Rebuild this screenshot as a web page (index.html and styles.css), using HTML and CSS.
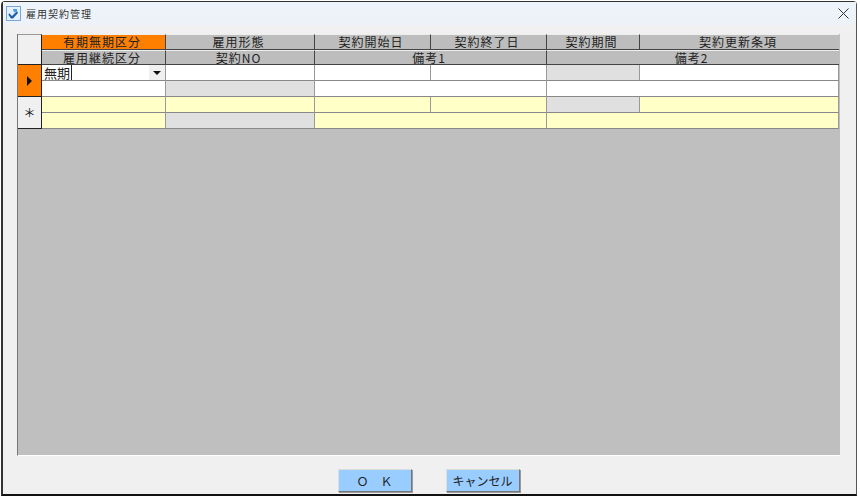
FILE: index.html
```html
<!DOCTYPE html>
<html>
<head>
<meta charset="utf-8">
	<title>雇用契約管理</title>

	<link rel="stylesheet" href="styles.css">
</head>
<body>

<div class="window">
	<div class="titlebar">
		<div class="title-left">
			<svg class="app-icon" width="15" height="15" viewBox="0 0 15 15">
				<rect x="0.5" y="0.5" width="14" height="14" fill="#e6f0fb" stroke="#7aa6d8"/>
				<path d="M3 7 L6 10 L11 5 L12 7 L7 12.5 L5 12.5 L2.5 9 Z" fill="#1f5fa8"/>
				<path d="M7 3 L11 3 L11 5 L8 6.5 Z" fill="#3f9ae8"/>
			</svg>
			<span class="title-text">雇用契約管理</span>
		</div>
		<svg class="close" width="11" height="11" viewBox="0 0 11 11">
			<path d="M0.5 0.5 L10.5 10.5 M10.5 0.5 L0.5 10.5" stroke="#333" stroke-width="1" fill="none"/>
		</svg>
	</div>

	<div class="content">
		<div class="grid-panel">
			<div class="grid">
				<div class="corner"></div>
				<div class="head head-active">有期無期区分</div>
				<div class="head">雇用形態</div>
				<div class="head">契約開始日</div>
				<div class="head">契約終了日</div>
				<div class="head">契約期間</div>
				<div class="head last">契約更新条項</div>
				<div class="head">雇用継続区分</div>
				<div class="head">契約NO</div>
				<div class="head span-2">備考1</div>
				<div class="head span-2 last">備考2</div>

				<div class="row-head row-current"><span class="arrow"></span></div>
				<div class="cell combo">
					<span class="combo-text">無期</span>
					<span class="combo-btn"><span class="combo-arrow"></span></span>
				</div>
				<div class="cell"></div>
				<div class="cell"></div>
				<div class="cell"></div>
				<div class="cell off"></div>
				<div class="cell last"></div>
				<div class="cell"></div>
				<div class="cell off"></div>
				<div class="cell span-2"></div>
				<div class="cell span-2 last"></div>

				<div class="row-head row-new">＊</div>
				<div class="cell new"></div>
				<div class="cell new"></div>
				<div class="cell new"></div>
				<div class="cell new"></div>
				<div class="cell off"></div>
				<div class="cell new last"></div>
				<div class="cell new"></div>
				<div class="cell off"></div>
				<div class="cell new span-2"></div>
				<div class="cell new span-2 last"></div>
			</div>
		</div>

		<div class="buttons">
			<button class="btn btn-ok">Ｏ　Ｋ</button>
			<button class="btn">キャンセル</button>
		</div>
	</div>
</div>

</body>
</html>
```

FILE: styles.css
```css
body{
	margin: 0;
	background: #fff;
	font-family: "Noto Sans CJK JP", "Liberation Sans", sans-serif;
	color: #222;
}
.window{
	margin: 1px 0 0 1px;
	width: 853px;
	height: 492px;
	border: 2px solid #333;
	border-top-width: 1px;
	border-right: 1px solid #555;
	border-bottom: 2px solid #111;
	border-radius: 4px 4px 0 0;
	background: #f0f0f0;
	display: flex;
	flex-direction: column;
}
.titlebar{
	height: 23px;
	padding: 0 7px 0 3px;
	background: linear-gradient(#eef4fb, #edf2f9);
	display: flex;
	align-items: center;
	justify-content: space-between;
	flex-shrink: 0;
}
.title-left{
	display: flex;
	align-items: center;
	gap: 5px;
}
.title-text{
	font-size: 10px;
	letter-spacing: 1px;
	color: #333;
}
.content{
	flex: 1;
	display: flex;
	flex-direction: column;
	padding: 9px 0 0 14px;
}
.grid-panel{
	width: 823px;
	height: 422px;
	background: #bfbfbf;
	border-left: 1px solid #777;
	border-bottom: 1px solid #fff;
	box-sizing: border-box;
}
.grid{
	display: grid;
	grid-template-columns: 24px 124px 149px 116px 116px 93px 199px;
	grid-template-rows: 16px 15px 16px 16px 16px 16px;
}
.corner{
	grid-row: span 2;
	background: #f0f0f0;
	border-right: 1px solid #222;
	border-bottom: 1px solid #222;
	border-top: 1px solid #999;
}
.head{
	background: #bdbdbd;
	border-right: 1px solid #444;
	border-bottom: 1px solid #444;
	border-top: 1px solid #eee;
	box-sizing: border-box;
	font-size: 12px;
	line-height: 13px;
	letter-spacing: 1px;
	text-align: center;
	white-space: nowrap;
	padding-right: 3px;
}
.head-active{
	background: #ff8000;
}
.span-2{
	grid-column: span 2;
}
.last{
	border-right: none;
}
.row-head{
	grid-row: span 2;
	border-right: 1px solid #222;
	border-bottom: 1px solid #222;
	display: flex;
	align-items: center;
	justify-content: center;
}
.row-current{
	background: #ff8000;
}
.row-new{
	background: #f0f0f0;
	font-size: 12px;
	line-height: 1;
	color: #111;
}
.arrow{
	width: 0;
	height: 0;
	border-left: 5px solid #111;
	border-top: 5px solid transparent;
	border-bottom: 5px solid transparent;
}
.cell{
	background: #fff;
	border-right: 1px solid #999;
	border-bottom: 1px solid #888;
	box-sizing: border-box;
}
.cell.off{
	background: #e0e0e0;
}
.cell.new{
	background: #ffffc8;
}
.combo{
	display: flex;
	justify-content: space-between;
	padding-left: 2px;
}
.combo-text{
	font-size: 13px;
	line-height: 15px;
	border-right: 1px solid #222;
	padding-right: 1px;
	height: 15px;
}
.combo-btn{
	width: 16px;
	background: #f0f0f0;
	display: flex;
	align-items: center;
	justify-content: center;
}
.combo-arrow{
	width: 0;
	height: 0;
	border-top: 4px solid #111;
	border-left: 4px solid transparent;
	border-right: 4px solid transparent;
}
.buttons{
	display: flex;
	justify-content: center;
	gap: 34px;
	padding-top: 13px;
	padding-right: 16px;
}
.btn{
	width: 74px;
	height: 23px;
	padding: 0;
	background: #99ccff;
	border: 1px solid;
	border-color: #ddd #777 #777 #ddd;
	box-shadow: 1px 1px 0 #999;
	font-family: inherit;
	font-size: 12px;
	color: #222;
}
```
